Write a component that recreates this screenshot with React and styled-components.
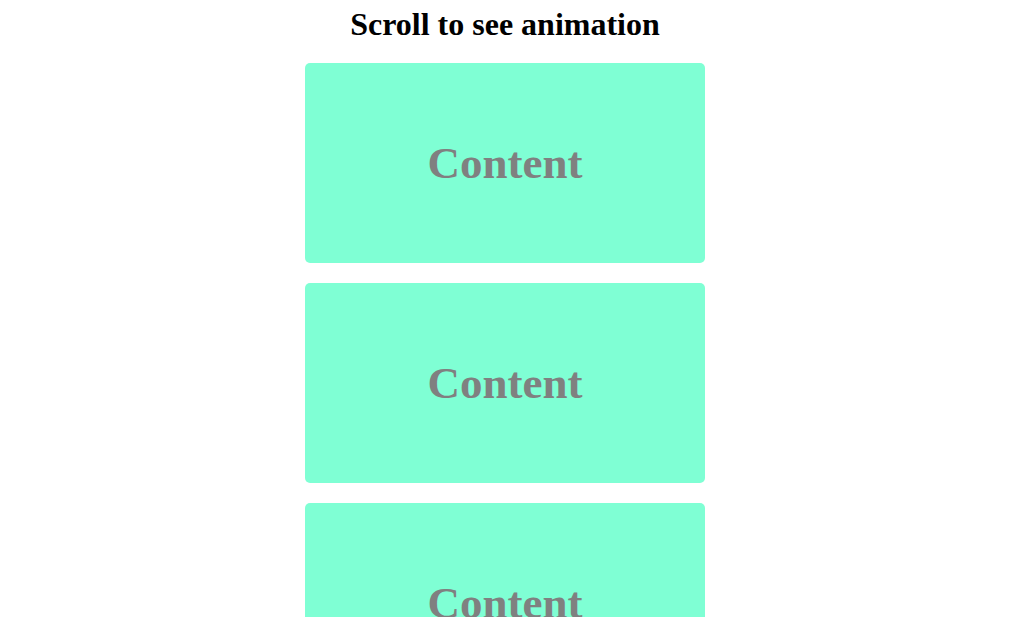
import React from "react";
import styled, { createGlobalStyle } from "styled-components";

const GlobalStyle = createGlobalStyle`
  html, body {
    margin: 0;
    padding: 0;
    background: #fff;
    font-family: "Liberation Serif", "Times New Roman", serif;
  }
`;

const Page = styled.div`
  display: flex;
  flex-direction: column;
  align-items: center;
  padding: 6px 2px 0 0;
`;

const Title = styled.h1`
  margin: 0 0 20px;
  font-size: 32px;
  font-weight: bold;
  color: #000;
  line-height: 37px;
`;

const List = styled.div`
  display: flex;
  flex-direction: column;
  gap: 20px;
`;

const Card = styled.div`
  width: 400px;
  height: 200px;
  background: aquamarine;
  border-radius: 5px;
  display: flex;
  align-items: center;
  justify-content: center;
  font-size: 45px;
  font-weight: bold;
  color: gray;
`;

const App = () => (
  <>
    <GlobalStyle />
    <Page>
      <Title>Scroll to see animation</Title>
      <List>
        {[1, 2, 3, 4].map((n) => (
          <Card key={n}>Content</Card>
        ))}
      </List>
    </Page>
  </>
);

export default App;
